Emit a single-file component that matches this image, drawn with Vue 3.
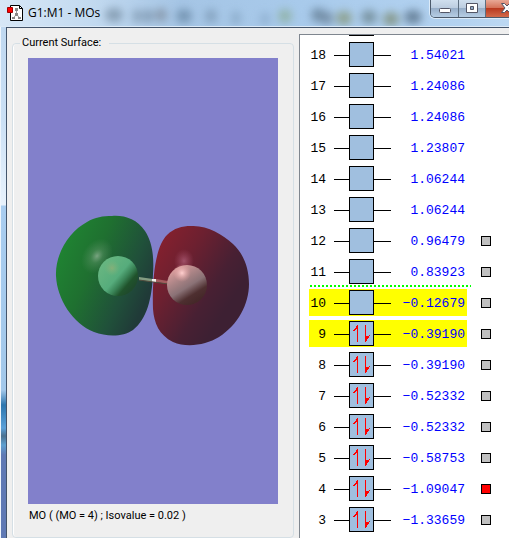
<script setup>
import { ref } from 'vue';

const isovalue = 0.02
const current = ref(4)

const orbitals = [
    { id: 18, energy: '1.54021' },
    { id: 17, energy: '1.24086' },
    { id: 16, energy: '1.24086' },
    { id: 15, energy: '1.23807' },
    { id: 14, energy: '1.06244' },
    { id: 13, energy: '1.06244' },
    { id: 12, energy: '0.96479', surface: true },
    { id: 11, energy: '0.83923', surface: true },
    { id: 10, energy: '−0.12679', surface: true, selected: true, lumo: true },
    { id: 9, energy: '−0.39190', surface: true, selected: true, occupied: true },
    { id: 8, energy: '−0.39190', surface: true, occupied: true },
    { id: 7, energy: '−0.52332', surface: true, occupied: true },
    { id: 6, energy: '−0.52332', surface: true, occupied: true },
    { id: 5, energy: '−0.58753', surface: true, occupied: true },
    { id: 4, energy: '−1.09047', surface: true, occupied: true },
    { id: 3, energy: '−1.33659', surface: true, occupied: true },
]

// toolbar of the window behind, seen through the glass: x, y, radius, colour
const smudges = [
    [114, 15, 9, '#6d8498'], [137, 16, 4, '#6a8299'], [148, 16, 5, '#6a8299'],
    [161, 15, 6, '#75808f'], [184, 16, 8, '#5d7d99'], [211, 16, 6, '#7390aa'], [236, 18, 5, '#7f9fbc'],
    [265, 19, 5, '#86a6c6'], [285, 16, 7, '#86a98a'], [318, 15, 7, '#536c80'], [327, 18, 6, '#5c7184'], [344, 18, 8, '#7d8a5e'],
    [369, 17, 8, '#5d7478'], [391, 19, 8, '#6f7c58'], [413, 17, 9, '#435a6e'],
]
</script>

<template>
    <div class="window">
        <header class="titlebar">
            <svg class="glass" width="509" height="26" aria-hidden="true">
                <defs>
                    <filter id="haze" x="-50%" y="-50%" width="200%" height="200%">
                        <feGaussianBlur stdDeviation="4" />
                    </filter>
                </defs>
                <g filter="url(#haze)" opacity=".65">
                    <ellipse v-for="s in smudges" :key="s[0]" :cx="s[0]" :cy="s[1]" :rx="s[2]" ry="7" :fill="s[3]" />
                </g>
            </svg>
            <svg class="app-icon" width="16" height="16" viewBox="0 0 16 16" aria-hidden="true">
                <path d="M3.500 .5h9l3 3v12h-12z" fill="#fff" stroke="#000" />
                <path d="M12.500 .5v3h3" fill="none" stroke="#000" />
                <path d="M9.500 5v5M9.500 9l-3 4M9.500 9l3 4" fill="none" stroke="#999" />
                <path d="M8 3h3v3H8zM8 8h3v3H8zM5 12h3v2H5zM11 12h3v2h-3z" fill="#888" />
                <path d="M.5 2.500h5v5h-5z" fill="#f00" stroke="#a00000" />
            </svg>
            <h1>G1:M1 - MOs</h1>
            <div class="controls">
                <button type="button" aria-label="Minimize">
                    <svg width="14" height="12"><rect x="1.500" y="5.500" width="11" height="4" rx="1" fill="#fff" stroke="#535666" /></svg>
                </button>
                <button type="button" aria-label="Maximize">
                    <svg width="14" height="12">
                        <path d="M1.500 .5h11v9h-11z" fill="#fff" stroke="#535666" />
                        <path d="M5.500 3.500h3v3h-3z" fill="#8fa9c4" stroke="#535666" />
                    </svg>
                </button>
                <button type="button" class="close" aria-label="Close">
                    <svg width="14" height="12"><path d="M1.500 .5h3l2.500 2.500 2.500-2.500h3L9 5l3.500 4.500h-3L7 7l-2.500 2.500h-3L5 5z" fill="#fff" stroke="#535666" /></svg>
                </button>
            </div>
        </header>

        <main class="client">
            <fieldset class="surface">
                <legend>Current Surface:</legend>
                <svg class="view" viewBox="28 58 250 446" preserveAspectRatio="xMidYMid slice" role="img" aria-label="Molecular orbital">
                    <defs>
                        <linearGradient id="green" x1=".1" y1=".2" x2=".95" y2=".65">
                            <stop offset="0" stop-color="#1f8232" />
                            <stop offset=".35" stop-color="#1f7030" />
                            <stop offset=".75" stop-color="#20503a" />
                            <stop offset="1" stop-color="#203a38" />
                        </linearGradient>
                        <linearGradient id="red" x1=".1" y1=".1" x2=".8" y2=".65">
                            <stop offset="0" stop-color="#84202e" />
                            <stop offset=".35" stop-color="#6c2030" />
                            <stop offset=".75" stop-color="#482033" />
                            <stop offset="1" stop-color="#3d2033" />
                        </linearGradient>
                        <radialGradient id="shine">
                            <stop offset="0" stop-color="#9fbba3" stop-opacity=".7" />
                            <stop offset=".4" stop-color="#7fa886" stop-opacity=".3" />
                            <stop offset="1" stop-color="#6f9c78" stop-opacity="0" />
                        </radialGradient>
                        <radialGradient id="shine-red">
                            <stop offset="0" stop-color="#b0607a" stop-opacity=".75" />
                            <stop offset="1" stop-color="#a04860" stop-opacity="0" />
                        </radialGradient>
                        <linearGradient id="atom-green" x1=".15" y1=".2" x2=".85" y2=".8">
                            <stop offset="0" stop-color="#66b580" />
                            <stop offset=".5" stop-color="#56ac7c" />
                            <stop offset=".68" stop-color="#3a8457" />
                            <stop offset=".85" stop-color="#20532c" />
                            <stop offset="1" stop-color="#1f4a2c" />
                        </linearGradient>
                        <linearGradient id="atom-red" x1=".25" y1=".1" x2=".75" y2=".9">
                            <stop offset="0" stop-color="#d59a9a" />
                            <stop offset=".3" stop-color="#a98385" />
                            <stop offset=".55" stop-color="#8a7276" />
                            <stop offset=".8" stop-color="#4e2f30" />
                            <stop offset="1" stop-color="#452829" />
                        </linearGradient>
                        <radialGradient id="glint">
                            <stop offset="0" stop-color="#ffd0cf" />
                            <stop offset="1" stop-color="#e8a3a3" stop-opacity="0" />
                        </radialGradient>
                        <radialGradient id="glint-green">
                            <stop offset="0" stop-color="#85b079" />
                            <stop offset="1" stop-color="#74b47c" stop-opacity="0" />
                        </radialGradient>
                    </defs>
                    <path d="M112 216C124 215 137 219 145 231C153 243 154 259 153 274C152 298 147 319 133 330C123 337 107 337 94 332C73 324 57 299 56 276C55 253 70 231 87 222C95 217 103 216 112 216Z" fill="url(#green)" />
                    <ellipse cx="97" cy="256" rx="14" ry="19" transform="rotate(35 97 256)" fill="url(#shine)" />
                    <path d="M191 226C207 225 222 234 233 244C244 254 249 269 249 284C249 304 238 325 219 337C206 345 187 348 173 342C159 335 154 323 153 309C152 280 155 247 167 235C174 228 182 226 191 226Z" fill="url(#red)" />
                    <ellipse cx="184" cy="261" rx="10" ry="12" fill="url(#shine-red)" />
                    <circle cx="118" cy="276" r="20" fill="url(#atom-green)" />
                    <circle cx="112" cy="268" r="8" fill="url(#glint-green)" />
                    <path d="M139 277l14 2v3l-14-2z" fill="#839c82" />
                    <path d="M152 279l4 0v3l-4 0z" fill="#f2f0ec" />
                    <path d="M156 279l12 2v3l-12-2z" fill="#a45c5e" />
                    <path d="M139 280l29 4" fill="none" stroke="#514c3d" stroke-width="1" />
                    <circle cx="187" cy="285" r="20" fill="url(#atom-red)" />
                    <circle cx="182" cy="273" r="9" fill="url(#glint)" />
                </svg>
                <p>MO ( (MO = {{ current }}) ; Isovalue = {{ isovalue }} )</p>
            </fieldset>

            <section class="orbitals">
                <svg class="previous" width="25" height="2" aria-hidden="true">
                    <path d="M0 0h25v1H0z" fill="#000" />
                </svg>
                <table aria-label="Orbital energies">
                    <tbody>
                        <tr v-for="mo in orbitals" :key="mo.id" :class="{ selected: mo.selected, lumo: mo.lumo }">
                            <th scope="row">{{ mo.id }}</th>
                            <td class="level">
                                <svg width="57" height="27" shape-rendering="crispEdges" aria-hidden="true">
                                    <path d="M0 14h15v1H0zM40 14h17v1H40z" fill="#000" />
                                    <path d="M15.500 1.500h24v24h-24z" fill="#a0bfdf" stroke="#000" />
                                    <g v-if="mo.occupied" fill="#f00">
                                        <path d="M23 5h1v17h-1zM22 6h1v3h-1zM21 8h1v2h-1zM20 9h1v2h-1zM19 10h1v1h-1z" />
                                        <path d="M31 5h1v17h-1zM32 16h1v5h-1zM33 16h1v3h-1zM34 16h1v2h-1zM35 15h1v1h-1z" />
                                    </g>
                                </svg>
                            </td>
                            <td class="energy">{{ mo.energy }}</td>
                            <td class="toggle">
                                <input v-if="mo.surface" v-model="current" type="radio" name="surface" :value="mo.id"
                                    :aria-label="'Show MO ' + mo.id">
                            </td>
                        </tr>
                    </tbody>
                </table>
            </section>
        </main>
    </div>
</template>

<style>
body {
    margin: 0;
}
</style>

<style scoped>
.window {
    display: flex;
    flex-direction: column;
    box-sizing: border-box;
    height: 100vh;
    min-height: 400px;
    padding-left: 6px;
    overflow: hidden;
    background: linear-gradient(#bcd6ef 0, #cbe0f5 120px, #e8f2fc 205px, #a9cdf0 206px, #a3c8ea 390px, #2c75ad 405px, #5ba0d8 428px, #4c7190 436px, #5d9fcf 445px, #5f79b4 455px, #5f79b4);
    box-shadow: inset 1px 0 #eef5fc;
    font-family: Roboto, "Liberation Sans", sans-serif;
    font-size: 11px;
    color: #000;
}

.titlebar {
    position: relative;
    display: flex;
    align-items: center;
    flex: none;
    gap: 5px;
    box-sizing: border-box;
    height: 27px;
    margin-left: -6px;
    padding-left: 7px;
    border-bottom: 1px solid #dceaf7;
    overflow: hidden;
    background: linear-gradient(90deg, #d7e7f6 0, #c3daf0 90px, #a5c5e5 180px, #a8caeb 300px, #b3d2f0 460px, #bcd8f2);
}

.glass {
    position: absolute;
    top: 0;
    left: 0;
}

.app-icon {
    position: relative;
}

h1 {
    position: relative;
    margin: 0;
    font: 12px/16px "Open Sans", "Noto Sans", sans-serif;
}

.controls {
    position: relative;
    display: flex;
    align-self: flex-start;
    flex: none;
    height: 17px;
    margin: 0 -20px 0 auto;
    border: 1px solid #4c5a6b;
    border-top: 0;
    border-radius: 0 0 5px 5px;
    overflow: hidden;
    box-shadow: 0 0 0 1px #dcebf9;
}

.controls button {
    display: flex;
    align-items: center;
    justify-content: center;
    width: 28px;
    padding: 0;
    border: 0;
    border-right: 1px solid #5d6e80;
    background: linear-gradient(#d0dfee 0, #bccde0 45%, #98afc9 50%, #b6cde4);
}

.controls button + button {
    width: 27px;
}

.controls button.close {
    width: 42px;
    border-right: 0;
    background: linear-gradient(#e8a896 0, #d5735a 45%, #b93a20 50%, #d2694a);
}

.client {
    display: flex;
    flex: 1;
    gap: 5px;
    min-height: 0;
    padding: 6px 0 0 5px;
    border-top: 1px solid #44556b;
    border-left: 1px solid #44556b;
    background: #efefef;
}

.surface {
    display: flex;
    flex-direction: column;
    flex: 1;
    min-width: 0;
    margin: 2px 0 0;
    padding: 8px 15px 14px;
    border: 1px solid #d5dfe5;
    border-radius: 4px;
    box-shadow: inset 1px 0 #fff;
}

.surface legend {
    margin-left: -8px;
    padding: 0 8px 0 2px;
    line-height: 14px;
}

.view {
    flex: 1;
    width: 100%;
    min-height: 0;
    background: #8280cb;
}

.surface p {
    margin: 5px 0 0 1px;
    line-height: 14px;
}

.orbitals {
    flex: none;
    width: 209px;
    border-top: 1px solid #7f868f;
    border-left: 1px solid #7f868f;
    overflow: hidden;
    background: #fff;
}

/* lower edge of the orbital that is scrolled out of view */
.previous {
    display: block;
    margin-left: 49px;
}

table {
    margin-left: 9px;
    border-spacing: 0 4px;
    font: 13px/15px "Liberation Mono", "Courier New", monospace;
}

th,
td {
    box-sizing: border-box;
    height: 27px;
    padding: 0;
}

th {
    position: relative;
    width: 18px;
    padding: 2px 1px 0 0;
    font-weight: 400;
    text-align: right;
}

.level {
    padding-left: 7px;
}

.level svg {
    display: block;
}

.energy {
    width: 76px;
    padding: 2px 2px 0 0;
    text-align: right;
    color: #00f;
}

.selected th,
.selected .level,
.selected .energy {
    background: #ff0;
}

.lumo th::before {
    content: "";
    position: absolute;
    top: -4px;
    left: 1px;
    width: 161px;
    height: 2px;
    background: repeating-linear-gradient(90deg, #0f0 0 2px, transparent 2px 4px);
}

.toggle {
    padding-left: 14px;
}

.toggle input {
    display: block;
    appearance: none;
    width: 10px;
    height: 10px;
    margin: 0;
    border: 1px solid #000;
    background: #c0c0c0;
}

.toggle input:checked {
    background: #f00;
}
</style>
